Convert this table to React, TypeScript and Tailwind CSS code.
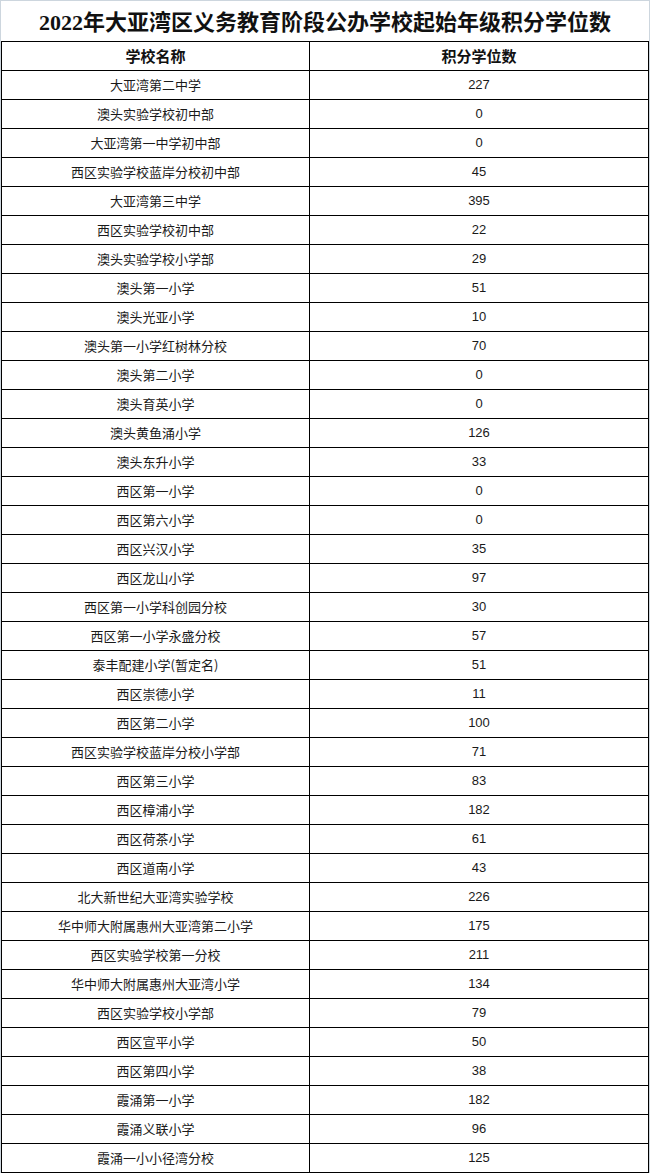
const rows: [string, number][] = [
  ["大亚湾第二中学", 227],
  ["澳头实验学校初中部", 0],
  ["大亚湾第一中学初中部", 0],
  ["西区实验学校蓝岸分校初中部", 45],
  ["大亚湾第三中学", 395],
  ["西区实验学校初中部", 22],
  ["澳头实验学校小学部", 29],
  ["澳头第一小学", 51],
  ["澳头光亚小学", 10],
  ["澳头第一小学红树林分校", 70],
  ["澳头第二小学", 0],
  ["澳头育英小学", 0],
  ["澳头黄鱼涌小学", 126],
  ["澳头东升小学", 33],
  ["西区第一小学", 0],
  ["西区第六小学", 0],
  ["西区兴汉小学", 35],
  ["西区龙山小学", 97],
  ["西区第一小学科创园分校", 30],
  ["西区第一小学永盛分校", 57],
  ["泰丰配建小学(暂定名)", 51],
  ["西区崇德小学", 11],
  ["西区第二小学", 100],
  ["西区实验学校蓝岸分校小学部", 71],
  ["西区第三小学", 83],
  ["西区樟浦小学", 182],
  ["西区荷茶小学", 61],
  ["西区道南小学", 43],
  ["北大新世纪大亚湾实验学校", 226],
  ["华中师大附属惠州大亚湾第二小学", 175],
  ["西区实验学校第一分校", 211],
  ["华中师大附属惠州大亚湾小学", 134],
  ["西区实验学校小学部", 79],
  ["西区宣平小学", 50],
  ["西区第四小学", 38],
  ["霞涌第一小学", 182],
  ["霞涌义联小学", 96],
  ["霞涌一小小径湾分校", 125],
];

export default function App() {
  return (
    <div className="w-[650px] h-[1173px] bg-white border-t border-l border-r border-[#cdd6de] font-['Noto_Sans_CJK_SC',sans-serif] text-[#1a1a1a]">
      {/* Title */}
      <div className="h-[41px] flex items-center justify-center pt-[3px] border-b border-black">
        <h1 className="text-[22px] font-bold text-[#111] font-['Liberation_Serif','Noto_Sans_CJK_SC',serif]">
          2022年大亚湾区义务教育阶段公办学校起始年级积分学位数
        </h1>
      </div>

      {/* Table */}
      <div className="border-l border-r border-black">
        <div className="flex h-[29px] border-b border-black text-[15px] font-bold text-[#111]">
          <div className="w-[308px] border-r border-black flex items-center justify-center">学校名称</div>
          <div className="flex-1 flex items-center justify-center">积分学位数</div>
        </div>
        {rows.map(([name, count], i) => (
          <div key={i} className="flex h-[29px] border-b border-black text-[13px]">
            <div className="w-[308px] border-r border-black flex items-center justify-center">{name}</div>
            <div className="flex-1 flex items-center justify-center font-['Liberation_Sans',sans-serif]">{count}</div>
          </div>
        ))}
      </div>
    </div>
  );
}
